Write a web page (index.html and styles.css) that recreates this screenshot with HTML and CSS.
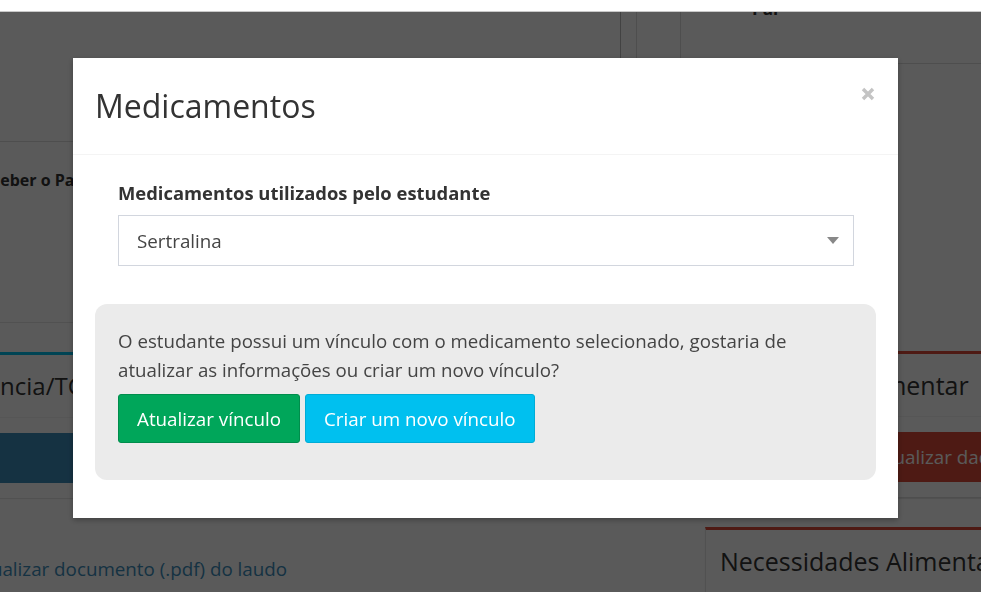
FILE: index.html
```html
<!DOCTYPE html>
<html lang="pt-BR">
<head>
    <meta charset="UTF-8">
    <title>Medicamentos</title>
    <link rel="stylesheet" href="styles.css">
</head>
<body>
<div class="topbar"></div>
<div class="page">
    <div class="main-col">
        <div class="top-table">
            <div class="cell cell-wide"></div>
            <div class="cell cell-a"></div>
            <div class="cell cell-b"></div>
        </div>
        <div class="info-row">
            <p class="info-title">Receber o Passe Livre</p>
        </div>
        <div class="box box-info">
            <div class="box-header">Deficiência/TGD</div>
            <div class="box-body">
                <div class="btn-block btn-primary">Atualizar dados</div>
            </div>
        </div>
        <a class="doc-link" href="#">Visualizar documento (.pdf) do laudo</a>
    </div>
    <div class="side-col">
        <div class="side-top"><span class="side-top-text">Pai</span></div>
        <div class="box box-danger box-first">
            <div class="box-header">Intolerância Alimentar</div>
            <div class="box-body">
                <div class="btn-block btn-danger">Atualizar dados</div>
            </div>
        </div>
        <div class="box box-danger">
            <div class="box-header">Necessidades Alimentares</div>
        </div>
    </div>
</div>

<div class="backdrop"></div>

<div class="modal">
    <div class="modal-header">
        <h4 class="modal-title">Medicamentos</h4>
        <span class="close">
            <svg width="14" height="14" viewBox="0 0 14 14"><path d="M2 2 L12 12 M12 2 L2 12" stroke="#c4c4c4" stroke-width="3.4" fill="none"/></svg>
        </span>
    </div>
    <div class="modal-body">
        <div class="form-group">
            <label class="form-label">Medicamentos utilizados pelo estudante</label>
            <div class="select">
                <span class="select-text">Sertralina</span>
                <span class="select-arrow"></span>
            </div>
        </div>
        <div class="notice">
            <p>O estudante possui um vínculo com o medicamento selecionado, gostaria de atualizar as informações ou criar um novo vínculo?</p>
            <div class="notice-actions">
                <button class="btn btn-success">Atualizar vínculo</button>
                <button class="btn btn-info">Criar um novo vínculo</button>
            </div>
        </div>
    </div>
</div>
</body>
</html>
```

FILE: styles.css
```css
*{
    margin: 0;
    padding: 0;
    box-sizing: border-box;
}
html, body{
    height: 100%;
    overflow: hidden;
}
body{
    font-family: "Open Sans", "Noto Sans", sans-serif;
    color: #333;
    background: #fff;
}
.topbar{
    height: 12px;
    background: #fff;
    border-bottom: 1px solid #c9c9c9;
    position: relative;
    z-index: 20;
}
.page{
    display: flex;
    gap: 15px;
    width: 1100px;
}

/* fundo da página */
.main-col{
    width: 690px;
}
.top-table{
    display: flex;
    height: 130px;
    border-bottom: 1px solid #ddd;
}
.cell{
    border-right: 1px solid #ddd;
}
.cell-wide{
    width: 621px;
    border-right-color: #bbb;
}
.cell-a{
    width: 16px;
}
.cell-b{
    width: 44px;
}
.info-row{
    height: 181px;
    border-bottom: 1px solid #e4e4e4;
    padding-top: 26px;
}
.info-title{
    font-weight: bold;
    font-size: 16px;
    line-height: 24px;
    margin-left: -28px;
}
.box{
    border-top: 3px solid #d2d6de;
    background: #fff;
    box-shadow: 0 1px 1px rgba(0,0,0,0.1);
}
.box-info{
    margin-top: 29px;
    border-top-color: #00c0ef;
    margin-left: -86px;
}
.box-danger{
    border-top-color: #dd4b39;
}
.box-header{
    font-size: 24px;
    height: 63px;
    line-height: 62px;
    padding: 0 10px;
    border-bottom: 1px solid #f4f4f4;
    white-space: nowrap;
}
.box-body{
    padding: 15px 10px 15px;
}
.btn-block{
    height: 50px;
    line-height: 50px;
    color: #fff;
    font-size: 18.8px;
    border-radius: 3px;
    white-space: nowrap;
}
.btn-primary{
    background: #3c8dbc;
    text-align: center;
}
.btn-danger{
    background: #dd4b39;
    padding-left: 160px;
}
.doc-link{
    display: block;
    margin-top: 58px;
    margin-left: -34px;
    font-size: 18.8px;
    color: #3c8dbc;
    text-decoration: none;
}
.side-col{
    width: 395px;
}
.side-top{
    height: 52px;
    border-bottom: 1px solid #ddd;
    overflow: hidden;
}
.side-top-text{
    display: block;
    font-weight: bold;
    font-size: 17px;
    line-height: 20px;
    margin-left: 47px;
    margin-top: -13px;
}
.box-first{
    margin-top: 287px;
}
.box-first .box-body{
    border-bottom: 1px solid #ddd;
}
.box-first .box-header{
    padding-left: 5px;
}
.box-danger + .box-danger{
    margin-top: 29px;
    border-left: 1px solid #e6e6e6;
}
.box-danger .box-header{
    font-size: 25px;
    padding-right: 14px;
}
.box-danger + .box-danger .box-header{
    padding-left: 14px;
}

/* camada escura */
.backdrop{
    position: fixed;
    top: 12px;
    left: 0;
    right: 0;
    bottom: 0;
    background: rgba(0,0,0,0.647);
    z-index: 10;
}

/* modal */
.modal{
    position: fixed;
    top: 58px;
    left: 73px;
    width: 825px;
    height: 460px;
    background: #fff;
    z-index: 30;
    box-shadow: 0 2px 6px rgba(0,0,0,0.3);
}
.modal-header{
    display: flex;
    justify-content: space-between;
    height: 97px;
    padding: 28px 23px 0 22px;
    border-bottom: 1px solid #f4f4f4;
}
.modal-title{
    font-size: 32px;
    font-weight: normal;
    line-height: 40px;
    color: #333;
}
.close{
    display: block;
    width: 14px;
    height: 14px;
    margin-top: 1px;
}
.close svg{
    display: block;
}
.modal-body{
    padding: 26px 22px 38px;
}
.form-group{
    padding: 0 22px 0 23px;
}
.form-label{
    display: block;
    font-size: 18.4px;
    font-weight: bold;
    line-height: 24px;
    color: #333;
    margin-bottom: 10px;
}
.select{
    display: flex;
    align-items: center;
    justify-content: space-between;
    height: 51px;
    border: 1px solid #d2d6de;
    padding: 0 14px 0 18px;
}
.select-text{
    font-size: 18.8px;
    color: #444;
}
.select-arrow{
    width: 0;
    height: 0;
    border-left: 6px solid transparent;
    border-right: 6px solid transparent;
    border-top: 7px solid #888;
}
.notice{
    margin-top: 38px;
    background: #ebebeb;
    border-radius: 12px;
    padding: 22px 23px 37px;
}
.notice p{
    font-size: 18.7px;
    line-height: 29px;
    color: #444;
}
.notice-actions{
    display: flex;
    gap: 5px;
    margin-top: 10px;
}
.btn{
    height: 49px;
    border: 1px solid transparent;
    border-radius: 3px;
    color: #fff;
    font-family: inherit;
    font-size: 18.8px;
    padding: 0 18px;
}
.btn-success{
    background: #00a65a;
    border-color: #008d4c;
}
.btn-info{
    background: #00c0ef;
    border-color: #00acd6;
}
```
